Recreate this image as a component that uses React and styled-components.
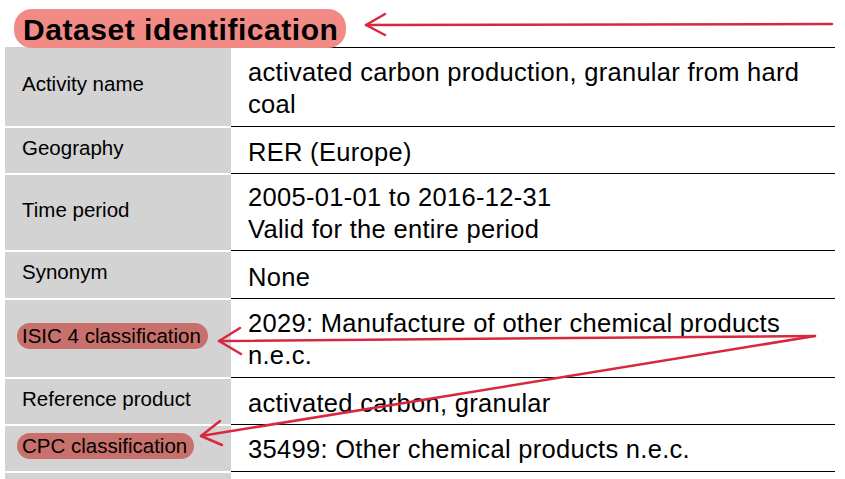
import React from 'react';
import styled, {createGlobalStyle} from 'styled-components';

const GlobalStyle = createGlobalStyle`
  html, body {
    margin: 0;
    padding: 0;
    background: #fff;
    font-family: "Liberation Sans", Arial, sans-serif;
    color: #000;
  }
`;

const Page = styled.div`
  position: relative;
  width: 845px;
  height: 479px;
  overflow: hidden;
  padding-left: 5px;
  box-sizing: border-box;
`;

const TitleRow = styled.div`
  height: 47px;
  display: flex;
  align-items: flex-start;
  padding-top: 9px;
  padding-left: 9px;
  box-sizing: border-box;
`;

const Title = styled.h1`
  margin: 0;
  height: 39px;
  padding: 0 8px 0 9px;
  border-radius: 18px;
  background: #f28b86;
  font-size: 30px;
  letter-spacing: 0.55px;
  font-weight: bold;
  line-height: 41px;
  white-space: nowrap;
  position: relative;
  z-index: 1;
`;

const Table = styled.div`
  display: flex;
  flex-direction: column;
  width: 830px;
`;

const Row = styled.div`
  display: grid;
  grid-template-columns: 226px 604px;
  height: ${p => p.h}px;
`;

const Label = styled.div`
  background: #d3d3d3;
  border-top: ${p => (p.first ? 'none' : '2px solid #fff')};
  display: flex;
  align-items: center;
  padding-left: ${p => (p.mark ? '12px' : '17px')};
  padding-bottom: ${p => p.nudge || 0}px;
  box-sizing: border-box;
  font-size: 20.5px;
  white-space: nowrap;
`;

const Mark = styled.span`
  background: #c8706c;
  border-radius: 13px;
  padding: 2px 7px 3px 5px;
  line-height: 21px;
`;

const Value = styled.div`
  border-top: 1px solid #000;
  display: flex;
  flex-direction: column;
  justify-content: center;
  padding-left: 17px;
  padding-top: ${p => p.nudge || 0}px;
  box-sizing: border-box;
  font-size: 25.5px;
  letter-spacing: 0.3px;
  line-height: 32px;
  white-space: nowrap;
`;

const Overlay = styled.svg`
  position: absolute;
  left: 0;
  top: 0;
  pointer-events: none;
`;

const rows = [
  {h: 79, label: 'Activity name', value: ['activated carbon production, granular from hard', 'coal'], nudge: 2},
  {h: 47, label: 'Geography', value: ['RER (Europe)'], nudge: 4},
  {h: 77, label: 'Time period', value: ['2005-01-01 to 2016-12-31', 'Valid for the entire period'], nudge: 2},
  {h: 48, label: 'Synonym', value: ['None'], nudge: 4},
  {h: 79, label: 'ISIC 4 classification', mark: true, value: ['2029: Manufacture of other chemical products', 'n.e.c.'], nudge: 2},
  {h: 47, label: 'Reference product', value: ['activated carbon, granular'], nudge: 3},
  {h: 47, label: 'CPC classification', mark: true, value: ['35499: Other chemical products n.e.c.'], nudge: 2},
  {h: 20, label: '', value: []},
];

const red = '#d8283f';

const Arrows = () => (
  <Overlay width="845" height="479">
    <g stroke={red} strokeWidth="2.5" fill="none" strokeLinecap="round" strokeLinejoin="round">
      <line x1="832" y1="24" x2="366" y2="25" />
      <polyline points="385,14 366,25 385,35" />
      <line x1="815" y1="336" x2="219" y2="341" />
      <polyline points="240,328 219,341 241,354" />
      <line x1="815" y1="336" x2="201" y2="436" />
      <polyline points="220,421 201,436 222,445" />
    </g>
  </Overlay>
);

export default function App() {
  return (
    <Page>
      <GlobalStyle />
      <TitleRow>
        <Title>Dataset identification</Title>
      </TitleRow>
      <Table>
        {rows.map((r, i) => (
          <Row key={i} h={r.h}>
            <Label first={i === 0} mark={r.mark} nudge={r.value.length === 1 ? 6 : 5}>
              {r.mark ? <Mark>{r.label}</Mark> : r.label}
            </Label>
            <Value nudge={r.nudge}>
              {r.value.map((line, j) => (
                <div key={j}>{line}</div>
              ))}
            </Value>
          </Row>
        ))}
      </Table>
      <Arrows />
    </Page>
  );
}
